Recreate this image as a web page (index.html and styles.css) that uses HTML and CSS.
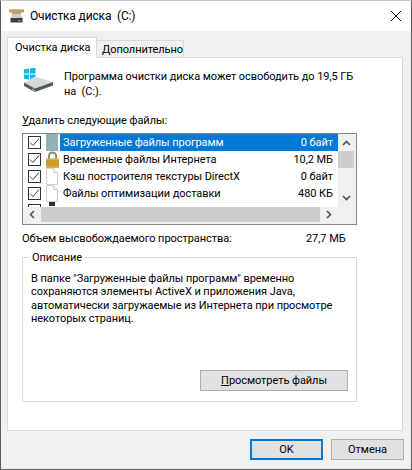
FILE: index.html
```html
<!DOCTYPE html>
<html lang="ru">
<head>
<meta charset="utf-8">
<title>Очистка диска (C:)</title>
<link rel="stylesheet" href="styles.css">
</head>
<body>
<div class="window">
  <header class="titlebar">
    <svg class="title-icon" width="16" height="14" viewBox="0 0 16 14"><path d="M0 0h15v3.500h-3v2H3v-2H0z" fill="#b9a468"/><path d="M0 0h15v1H0z" fill="#d4c48c"/><path d="M3 5.500h9l1.500 3.500h-12z" fill="#c9cdd2"/><path d="M1.500 9h12v4.500h-12z" fill="#3c4046"/><path d="M9.500 11h2v1.500h-2z" fill="#5fd05f"/></svg>
    <span class="title-text">Очистка диска&nbsp; (C:)</span>
    <svg class="close" width="10" height="10" viewBox="0 0 10 10"><path d="M0 0l10 10M10 0L0 10" stroke="#111" stroke-width="1" fill="none"/></svg>
  </header>
  <main class="body">
    <nav class="tabs">
      <span class="tab active">Очистка диска</span>
      <span class="tab">Дополнительно</span>
    </nav>
    <section class="panel">
      <div class="intro">
        <svg class="big-icon" width="32" height="26" viewBox="0 0 32 26">
          <path d="M0 1.200l5-.7v5H0zM6 .4l5.500-.8v5.900H6zM0 6.500h5v5l-5-.7zM6 6.500h5.500v5.900L6 11.600z" fill="#19b4f0"/>
          <path d="M0 14.500l11-6 18 5.500-18 6.500z" fill="#d6d8db"/>
          <path d="M0 14.500l11 6 18-6.500v3.500L11 24 0 18z" fill="#54585e"/>
          <path d="M8 20.500l3 1.500v1.500l-3-1.500z" fill="#6fd06f"/>
        </svg>
        <p class="intro-text">Программа очистки диска может освободить до 19,5 ГБ<br>на&nbsp; (C:).</p>
      </div>
      <p class="list-label"><u>У</u>далить следующие файлы:</p>
      <div class="list">
        <div class="rows">
          <div class="row">
            <span class="check"><svg width="11" height="11" viewBox="0 0 11 11"><path d="M1 5.500l3 3 6-7" stroke="#444" stroke-width="1" fill="none"/></svg></span>
            <span class="file-icon"><span class="teal"></span></span>
            <span class="name selected">Загруженные файлы программ<span class="size">0 байт</span></span>
          </div>
          <div class="row">
            <span class="check"><svg width="11" height="11" viewBox="0 0 11 11"><path d="M1 5.500l3 3 6-7" stroke="#444" stroke-width="1" fill="none"/></svg></span>
            <span class="file-icon"><svg width="15" height="17" viewBox="0 0 15 17"><path d="M4 8V5a3.500 3.500 0 0 1 7 0v3" stroke="#8a8a7a" stroke-width="2" fill="none"/><path d="M1 7.500h13V17H1z" fill="#dcae36"/><path d="M1 10h13M1 12h13M1 14h13" stroke="#b98a1e"/></svg></span>
            <span class="name">Временные файлы Интернета<span class="size">10,2 МБ</span></span>
          </div>
          <div class="row">
            <span class="check"><svg width="11" height="11" viewBox="0 0 11 11"><path d="M1 5.500l3 3 6-7" stroke="#444" stroke-width="1" fill="none"/></svg></span>
            <span class="file-icon"><svg width="14" height="17" viewBox="0 0 14 17"><path d="M1.500.500h7l4 4v12h-11z" fill="#fff" stroke="#cfcfcf"/><path d="M8.500.500v4h4" fill="#f0f0f0" stroke="#cfcfcf"/></svg></span>
            <span class="name">Кэш построителя текстуры DirectX<span class="size">0 байт</span></span>
          </div>
          <div class="row">
            <span class="check"><svg width="11" height="11" viewBox="0 0 11 11"><path d="M1 5.500l3 3 6-7" stroke="#444" stroke-width="1" fill="none"/></svg></span>
            <span class="file-icon"><svg width="14" height="17" viewBox="0 0 14 17"><path d="M1.500.500h7l4 4v12h-11z" fill="#fff" stroke="#cfcfcf"/><path d="M8.500.500v4h4" fill="#f0f0f0" stroke="#cfcfcf"/></svg></span>
            <span class="name">Файлы оптимизации доставки<span class="size">480 КБ</span></span>
          </div>
          <div class="row">
            <span class="check"></span>
            <span class="file-icon"><span class="dark"></span></span>
            <span class="name"></span>
          </div>
        </div>
        <div class="vbar">
          <svg width="9" height="6" viewBox="0 0 9 6"><path d="M1 5l3.500-3.500L8 5" stroke="#505050" stroke-width="1.600" fill="none"/></svg>
          <span class="vthumb"></span>
          <svg width="9" height="6" viewBox="0 0 9 6"><path d="M1 1l3.500 3.500L8 1" stroke="#505050" stroke-width="1.600" fill="none"/></svg>
        </div>
        <div class="hbar">
          <svg width="6" height="9" viewBox="0 0 6 9"><path d="M5 1L1.500 4.500 5 8" stroke="#505050" stroke-width="1.600" fill="none"/></svg>
          <span class="hthumb"></span>
          <svg width="6" height="9" viewBox="0 0 6 9"><path d="M1 1l3.500 3.500L1 8" stroke="#505050" stroke-width="1.600" fill="none"/></svg>
        </div>
        <div class="corner"></div>
      </div>
      <div class="total"><span>Объем высвобождаемого пространства:</span><span class="total-value">27,7 МБ</span></div>
      <div class="desc">
        <span class="legend">Описание</span>
        <p class="desc-text">В папке "Загруженные файлы программ" временно сохраняются элементы ActiveX и приложения Java, автоматически загружаемые из Интернета при просмотре некоторых страниц.</p>
        <button class="btn view-btn" type="button"><u>П</u>росмотреть файлы</button>
      </div>
    </section>
    <footer class="actions">
      <button class="btn default" type="button">OK</button>
      <button class="btn" type="button">Отмена</button>
    </footer>
  </main>
</div>
</body>
</html>
```
FILE: styles.css
```css
html, body { margin: 0; padding: 0; }
body { width: 412px; height: 470px; overflow: hidden; font: 11px/16px Roboto, sans-serif; letter-spacing: -0.06px; color: #000; }
.window { box-sizing: border-box; width: 412px; height: 470px; border: 1px solid #5c5c5c; border-top-color: #c8c8c8; display: flex; flex-direction: column; background: #fff; }
.titlebar { height: 30px; flex: none; display: flex; align-items: center; padding: 0 0 0 8px; background: #fff; }
.title-icon { flex: none; margin-right: 5px; }
.title-text { flex: 1; font-size: 12px; letter-spacing: -0.15px; }
.close { margin-right: 10px; }
.body { flex: 1; background: #f0f0f0; padding: 7px 8px 0 6px; display: flex; flex-direction: column; }
.tabs { display: flex; align-items: flex-end; height: 20px; position: relative; z-index: 1; margin-bottom: -1px; }
.tab { box-sizing: border-box; height: 18px; width: 88px; border: 1px solid #d9d9d9; border-bottom: 0; padding: 1px 0 0 5px; line-height: 16px; white-space: nowrap; }
.tab.active { width: 90px; height: 21px; background: #fff; padding: 2px 0 0 7px; margin-right: -1px; }
.panel { box-sizing: border-box; height: 374px; background: #fff; border: 1px solid #d9d9d9; padding: 0 14px; display: flex; flex-direction: column; }
.intro { display: flex; height: 55px; padding-top: 10px; box-sizing: border-box; }
.big-icon { flex: none; margin: 0 8px 0 2px; }
.intro-text { margin: 1px 0 0; line-height: 15px; white-space: nowrap; }
.list-label { margin: 0 0 4px; height: 16px; white-space: nowrap; }
.list { box-sizing: border-box; width: 335px; height: 92px; border: 1px solid #82878c; display: grid; grid-template-columns: 315px 18px; grid-template-rows: 73px 17px; background: #fff; }
.rows { overflow: hidden; }
.row { display: flex; height: 17px; align-items: center; }
.check { box-sizing: border-box; flex: none; width: 13px; height: 13px; border: 1px solid #333; margin-left: 5px; display: flex; align-items: center; justify-content: center; }
.file-icon { flex: none; width: 16px; height: 17px; margin: 0 0 0 3px; display: flex; justify-content: center; }
.teal { width: 12px; height: 17px; background: #8fb4b4; }
.dark { width: 6px; height: 4px; background: #333; }
.name { flex: 1; display: flex; justify-content: space-between; height: 17px; line-height: 17px; padding: 0 5px 0 3px; white-space: nowrap; overflow: hidden; }
.selected { background: #0078d7; color: #fff; }
.vbar { grid-row: 1; grid-column: 2; background: #f0f0f0; display: flex; flex-direction: column; align-items: center; justify-content: space-between; padding: 6px 2px 6px 0; position: relative; box-sizing: border-box; }
.vthumb { width: 16px; height: 17px; background: #cdcdcd; position: absolute; left: 0; top: 17px; }
.hbar { grid-row: 2; grid-column: 1 / 2; background: #f0f0f0; display: flex; align-items: flex-start; }
.hbar svg { flex: none; margin: 3px 6px 0; }
.hthumb { flex: 1; height: 15px; background: #cdcdcd; }
.corner { grid-row: 2; grid-column: 2; background: #f0f0f0; }
.total { display: flex; margin-top: 6px; height: 16px; white-space: nowrap; }
.total span:first-child { width: 284px; }
.total-value { width: 51px; }
.desc { box-sizing: border-box; margin: 10px 0 0; padding: 0 8px 10px; width: 335px; height: 145px; border: 1px solid #d9d9d9; position: relative; display: flex; flex-direction: column; }
.legend { position: absolute; left: 6px; top: -8px; padding: 0 3px; background: #fff; line-height: 16px; }
.desc-text { margin: 14px 0 0; line-height: 13.330px; }
.btn { box-sizing: border-box; font: inherit; letter-spacing: inherit; color: #000; background: #e1e1e1; border: 1px solid #adadad; padding: 0; }
.view-btn { align-self: flex-end; margin-top: auto; width: 148px; height: 21px; }
.actions { display: flex; justify-content: flex-end; gap: 8px; padding: 8px 0 0; margin-right: -1px; }
.actions .btn { width: 73px; height: 21px; }
.default { border: 2px solid #0078d7; }
```
